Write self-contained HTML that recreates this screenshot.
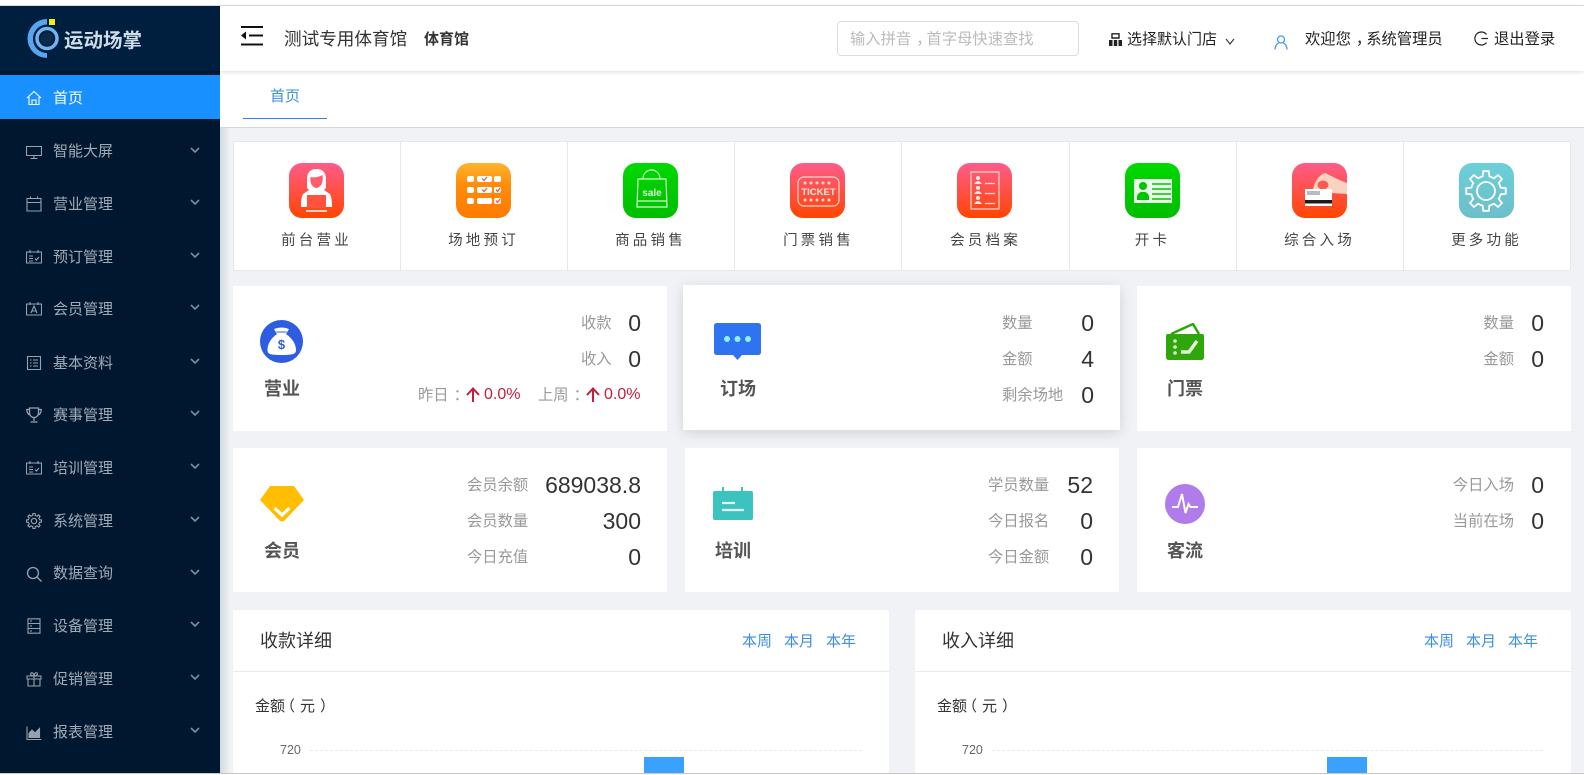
<!DOCTYPE html>
<html lang="zh-CN">
<head>
<meta charset="utf-8">
<title>运动场掌</title>
<style>
html,body{margin:0;padding:0;background:#fff;}
body{position:relative;width:1584px;height:775px;overflow:hidden;font-family:"Liberation Sans","Noto Sans CJK SC",sans-serif;color:#333;}
div,span,svg{position:absolute;}
.x{white-space:nowrap;line-height:20px;height:20px;}
.m{left:53px;font-size:15px;color:#a0abb6;}
.card{background:#fff;}
.l{font-size:15.300px;color:#999;}
.v{font-size:23px;color:#333;line-height:30px;height:30px;white-space:nowrap;}
.h{font-size:18px;font-weight:700;color:#555;line-height:24px;height:24px;width:80px;text-align:center;white-space:nowrap;}
.g{font-size:14.500px;color:#444;letter-spacing:3.200px;width:167px;text-align:center;top:231px;white-space:nowrap;line-height:20px;height:20px;}
.a{top:163px;width:55px;height:55px;}
.d{top:142px;width:1px;height:128px;background:#e6e8eb;}
.lk{font-size:15px;color:#3d8fe0;}
.ic{left:26px;width:16px;height:16px;fill:none;stroke:#97a2ae;stroke-width:1.1;}
.ch{left:190px;width:10px;height:6px;fill:none;stroke:#7f8c99;stroke-width:1.6;}
.r{color:#c41f3a;font-size:16px;}
i{font-style:normal;position:relative;left:5px;}
i.n{left:-5px;}
</style>
</head>
<body>
<!-- top line -->
<div style="left:0;top:5px;width:1584px;height:1px;background:#ddd"></div>

<!-- content bg -->
<div style="left:220px;top:128px;width:1364px;height:645px;background:#f0f2f5"></div>
<div style="left:0;top:773px;width:1584px;height:1px;background:#c8c8c8"></div>
<div style="left:220px;top:128px;width:10px;height:645px;background:linear-gradient(90deg,#d5d9df,#f0f2f5)"></div>

<!-- sidebar -->
<div style="left:0;top:6px;width:220px;height:767px;background:#001730"></div>
<div style="left:0;top:6px;width:220px;height:65px;background:#001f3f"></div>
<div style="left:0;top:75px;width:220px;height:44px;background:#1890ff"></div>

<!-- logo -->
<svg style="left:26px;top:18px" width="36" height="42" viewBox="0 0 36 42">
<path d="M21 1A19.500 19.500 0 1 0 21 40L21 35A14 14 0 0 1 7 20.500A14 14 0 0 1 21 6.500Z" fill="#57a5f0"/>
<circle cx="21" cy="20.500" r="10" fill="none" stroke="#6fb4f2" stroke-width="3.500"/>
<circle cx="21" cy="20.500" r="6" fill="#0b2b4a"/>
<rect x="23" y="1" width="6" height="6" fill="#f5ec14"/>
</svg>
<div class="x" style="left:64px;top:31px;font-size:19.500px;font-weight:700;color:#cfdde9">运动场掌</div>

<!-- menu -->
<svg class="ic" style="top:90px;stroke:#fff" viewBox="0 0 16 16"><path d="M1 8L8 1.500L15 8M3 7V14.500H13V7M6 14.500V10H10V14.500"/></svg>
<div class="x m" style="top:89px;color:#fff">首页</div>

<svg class="ic" style="top:144px" viewBox="0 0 16 16"><path d="M.5 2.500H15.500V11.500H.5ZM8 11.500V14.500M4.500 14.500H11.500"/></svg>
<div class="x m" style="top:142px">智能大屏</div>
<svg class="ch" style="top:147px" viewBox="0 0 10 6"><path d="M1 1L5 5L9 1"/></svg>

<svg class="ic" style="top:196px" viewBox="0 0 16 16"><path d="M1 2.500H15V15H1ZM1 6.500H15M4.500 .5V3M11.500 .5V3"/></svg>
<div class="x m" style="top:195px">营业管理</div>
<svg class="ch" style="top:199px" viewBox="0 0 10 6"><path d="M1 1L5 5L9 1"/></svg>

<svg class="ic" style="top:249px" viewBox="0 0 16 16"><path d="M.5 3H15.500V14H.5ZM4 1V4M12 1V4M3 7H7M3 9.500H7M3 12H7M9 9.500L10.500 11L13 8"/></svg>
<div class="x m" style="top:248px">预订管理</div>
<svg class="ch" style="top:252px" viewBox="0 0 10 6"><path d="M1 1L5 5L9 1"/></svg>

<svg class="ic" style="top:301px" viewBox="0 0 16 16"><path d="M.5 3H15.500V14H.5ZM4 1V4M12 1V4M5 12L8 5L11 12M6 10H10"/></svg>
<div class="x m" style="top:300px">会员管理</div>
<svg class="ch" style="top:304px" viewBox="0 0 10 6"><path d="M1 1L5 5L9 1"/></svg>

<svg class="ic" style="top:355px" viewBox="0 0 16 16"><path d="M1.500 1.500H14.500V14.500H1.500ZM4 5H5.500M4 8H5.500M4 11H5.500M7 5H12M7 8H12M7 11H12"/></svg>
<div class="x m" style="top:354px">基本资料</div>
<svg class="ch" style="top:358px" viewBox="0 0 10 6"><path d="M1 1L5 5L9 1"/></svg>

<svg class="ic" style="top:407px;stroke-width:1.300" viewBox="0 0 16 16"><path d="M3.500 1H12.500V6A4.500 4.500 0 0 1 3.500 6ZM3.500 2.500H.8Q.8 7 4 8M12.500 2.500H15.200Q15.200 7 12 8M8 10.500V14M4.500 15H11.500"/></svg>
<div class="x m" style="top:406px">赛事管理</div>
<svg class="ch" style="top:410px" viewBox="0 0 10 6"><path d="M1 1L5 5L9 1"/></svg>

<svg class="ic" style="top:460px" viewBox="0 0 16 16"><path d="M.5 3H15.500V14H.5ZM4 1V4M12 1V4M3 7H7M3 9.500H7M3 12H7M9 9.500L10.500 11L13 8"/></svg>
<div class="x m" style="top:459px">培训管理</div>
<svg class="ch" style="top:463px" viewBox="0 0 10 6"><path d="M1 1L5 5L9 1"/></svg>

<svg class="ic" style="top:513px" viewBox="-21 -21 42 42"><g stroke-width="3">
<circle r="7"/>
<path id="gt" d="M-5.740-13.860L-3.370-14.620L-2.780-19.810H2.780L3.370-14.620L5.740-13.860"/>
<use href="#gt" transform="rotate(45)"/><use href="#gt" transform="rotate(90)"/><use href="#gt" transform="rotate(135)"/><use href="#gt" transform="rotate(180)"/><use href="#gt" transform="rotate(225)"/><use href="#gt" transform="rotate(270)"/><use href="#gt" transform="rotate(315)"/>
</g></svg>
<div class="x m" style="top:512px">系统管理</div>
<svg class="ch" style="top:516px" viewBox="0 0 10 6"><path d="M1 1L5 5L9 1"/></svg>

<svg class="ic" style="top:566px;stroke-width:1.300" viewBox="0 0 16 16"><circle cx="7" cy="7" r="5.500"/><path d="M11 11L15.500 15.500"/></svg>
<div class="x m" style="top:564px">数据查询</div>
<svg class="ch" style="top:569px" viewBox="0 0 10 6"><path d="M1 1L5 5L9 1"/></svg>

<svg class="ic" style="top:618px" viewBox="0 0 16 16"><path d="M2 .8H14V15.200H2ZM2 5.500H14M2 10.500H14M4 3H6M4 8H6M4 13H6"/></svg>
<div class="x m" style="top:617px">设备管理</div>
<svg class="ch" style="top:621px" viewBox="0 0 10 6"><path d="M1 1L5 5L9 1"/></svg>

<svg class="ic" style="top:671px" viewBox="0 0 16 16"><path d="M1 5H15V8H1ZM2 8V15H14V8M8 5V15M8 5C5 5 4 3 5 2S8 2.500 8 5C8 2.500 10 1 11 2S11 5 8 5"/></svg>
<div class="x m" style="top:670px">促销管理</div>
<svg class="ch" style="top:674px" viewBox="0 0 10 6"><path d="M1 1L5 5L9 1"/></svg>

<svg class="ic" style="top:725px" viewBox="0 0 16 16"><path d="M1 1.500V14.500H15.500"/><path d="M3 12.500V8.500L6 5L9 8L13.500 3.500V12.500Z" fill="#97a2ae"/></svg>
<div class="x m" style="top:723px">报表管理</div>
<svg class="ch" style="top:727px" viewBox="0 0 10 6"><path d="M1 1L5 5L9 1"/></svg>

<!-- header -->
<div style="left:220px;top:71px;width:1364px;height:56px;background:#fff"></div>
<div style="left:220px;top:127px;width:1364px;height:1px;background:#d4d6d9"></div>
<div style="left:220px;top:6px;width:1364px;height:65px;background:#fff;box-shadow:0 1px 4px rgba(0,0,0,.14)"></div>

<svg style="left:241px;top:26px" width="22" height="20" viewBox="0 0 22 20"><path d="M0 1H22M8 9.500H22M0 18.500H22" stroke="#111" stroke-width="2" fill="none"/><path d="M5 5.500V13.500L0 9.500Z" fill="#111"/></svg>
<div class="x" style="left:284px;top:29px;font-size:17.600px;color:#333">测试专用体育馆</div>
<div class="x" style="left:424px;top:30px;font-size:15px;font-weight:700;color:#333">体育馆</div>

<div style="left:837px;top:21px;width:240px;height:33px;border:1px solid #ddd;border-radius:4px;background:#fff"></div>
<div class="x" style="left:850px;top:30px;font-size:15.300px;color:#bbb">输入拼音<i>，</i>首字母快速查找</div>

<svg style="left:1109px;top:33px" width="13" height="13" viewBox="0 0 13 13"><path d="M3 .8H10V5H3Z" fill="none" stroke="#222" stroke-width="1.400"/><path d="M0 7H3.500V13H0ZM4.800 7H8.200V13H4.800ZM9.500 7H13V13H9.500Z" fill="#222"/></svg>
<div class="x" style="left:1127px;top:30px;font-size:15px;color:#222">选择默认门店</div>
<svg style="left:1225px;top:38px" width="10" height="7" viewBox="0 0 10 7"><path d="M1 1L5 6L9 1" fill="none" stroke="#333" stroke-width="1.100"/></svg>

<svg style="left:1274px;top:35px" width="14" height="15" viewBox="0 0 14 15"><circle cx="7" cy="4.500" r="3.500" fill="none" stroke="#4a9bee" stroke-width="1.300"/><path d="M1 14.500C1 10.500 3.500 8 5 8M13 14.500C13 10.500 10.500 8 9 8" fill="none" stroke="#4a9bee" stroke-width="1.300"/></svg>
<div class="x" style="left:1305px;top:30px;font-size:15.300px;color:#222">欢迎您<i>，</i>系统管理员</div>

<svg style="left:1474px;top:31px" width="15" height="15" viewBox="0 0 15 15"><path d="M12.500 3.500A6.500 6.500 0 1 0 12.500 11.500" fill="none" stroke="#222" stroke-width="1.200"/><path d="M7.500 7.500H14" stroke="#222" stroke-width="1.200"/></svg>
<div class="x" style="left:1494px;top:30px;font-size:15.300px;color:#222">退出登录</div>

<!-- tab -->
<div class="x" style="left:270px;top:87px;font-size:15px;color:#3d8fe0">首页</div>
<div style="left:243px;top:118px;width:84px;height:1px;background:#2d86df"></div>

<!-- shortcuts -->
<div style="left:233px;top:141px;width:1336px;height:128px;background:#fff;border:1px solid #e6e8eb;border-radius:3px"></div>
<div class="d" style="left:400px"></div><div class="d" style="left:567px"></div><div class="d" style="left:734px"></div><div class="d" style="left:901px"></div><div class="d" style="left:1069px"></div><div class="d" style="left:1236px"></div><div class="d" style="left:1403px"></div>

<svg width="0" height="0" style="left:0;top:0"><defs>
<linearGradient id="gr" x1="0" y1="0" x2="0" y2="1"><stop offset="0" stop-color="#ff5c8c"/><stop offset="1" stop-color="#ff4500"/></linearGradient>
<linearGradient id="go" x1="0" y1="0" x2="0" y2="1"><stop offset="0" stop-color="#ffb52e"/><stop offset=".4" stop-color="#ff8c0a"/><stop offset="1" stop-color="#ff7a00"/></linearGradient>
<linearGradient id="gg" x1="0" y1="0" x2="0" y2="1"><stop offset="0" stop-color="#00d900"/><stop offset="1" stop-color="#00bd00"/></linearGradient>
<linearGradient id="gb" x1="0" y1="0" x2="0" y2="1"><stop offset="0" stop-color="#6cd0d8"/><stop offset="1" stop-color="#6dbecb"/></linearGradient>
</defs></svg>

<svg class="a" style="left:289px" viewBox="0 0 55 55"><rect width="55" height="55" rx="13" fill="url(#gr)"/>
<path d="M27.500 6C21 6 18 10 18 16V25L20 27L14 31C12 35 12 40 12 44H43C43 40 43 35 41 31L35 27L37 25V16C37 10 34 6 27.500 6Z" fill="#fff"/>
<path d="M21.500 14C25 15 30 14 33.500 12C34.500 18 33 24 27.500 25C22 24 21 19 21.500 14Z" fill="#ff5f6d"/>
<path d="M18 32H37V45H18Z" fill="#ff5340"/><path d="M17 48H38" stroke="#fff" stroke-width="1.500"/></svg>
<div class="x g" style="left:233px">前台营业</div>

<svg class="a" style="left:456px" viewBox="0 0 55 55"><rect width="55" height="55" rx="13" fill="url(#go)"/>
<g fill="#fff"><rect x="11" y="13" width="7" height="6" rx="2"/><rect x="21" y="13" width="15" height="6" rx="2"/><rect x="38" y="13" width="7" height="6" rx="2"/><rect x="11" y="24" width="7" height="6" rx="2"/><rect x="21" y="24" width="15" height="6" rx="2"/><rect x="38" y="24" width="7" height="6" rx="2"/><rect x="11" y="35" width="7" height="6" rx="2"/><rect x="21" y="35" width="15" height="6" rx="2"/><rect x="38" y="35" width="7" height="6" rx="2"/></g>
<path d="M26 15.500L28 17.500L31 14M26 26.500L28 28.500L31 25M40 26.500L41.500 28.500L44 25M40 37.500L41.500 39.500L44 36" fill="none" stroke="#f0503a" stroke-width="1.200"/></svg>
<div class="x g" style="left:400px">场地预订</div>

<svg class="a" style="left:623px" viewBox="0 0 55 55"><rect width="55" height="55" rx="13" fill="url(#gg)"/>
<path d="M15 16H43L44 44H14ZM14.500 38H43.500M20 16C20 4 37 4 37 16" fill="none" stroke="#d6f7d6" stroke-width="1.200"/>
<text x="29" y="33" font-family="Liberation Sans" font-size="10" font-weight="700" fill="#d9f8d9" text-anchor="middle">sale</text></svg>
<div class="x g" style="left:567px">商品销售</div>

<svg class="a" style="left:790px" viewBox="0 0 55 55"><rect width="55" height="55" rx="13" fill="url(#gr)"/>
<rect x="8" y="14" width="41" height="29" rx="6" fill="none" stroke="#ffd9cf" stroke-width="1.200"/>
<text x="28.500" y="32" font-family="Liberation Sans" font-size="9.500" font-weight="700" fill="#ffe9e2" text-anchor="middle">TICKET</text>
<g fill="#ffd9cf"><circle cx="15" cy="20" r="1.500"/><circle cx="21" cy="20" r="1.500"/><circle cx="27" cy="20" r="1.500"/><circle cx="33" cy="20" r="1.500"/><circle cx="39" cy="20" r="1.500"/><circle cx="15" cy="37" r="1.500"/><circle cx="21" cy="37" r="1.500"/><circle cx="27" cy="37" r="1.500"/><circle cx="33" cy="37" r="1.500"/><circle cx="39" cy="37" r="1.500"/></g></svg>
<div class="x g" style="left:735px">门票销售</div>

<svg class="a" style="left:957px" viewBox="0 0 55 55"><rect width="55" height="55" rx="13" fill="url(#gr)"/>
<rect x="14" y="9" width="28" height="37" fill="none" stroke="#ffd9cf" stroke-width="1.200"/>
<g fill="#ffe9e2"><circle cx="21" cy="15" r="2"/><path d="M17 21Q21 15 25 21Z"/><circle cx="21" cy="25" r="2"/><path d="M17 31Q21 25 25 31Z"/><circle cx="21" cy="35" r="2"/><path d="M17 41Q21 35 25 41Z"/></g>
<path d="M28 20.500H38M28 30.500H38M28 40.500H38" stroke="#ffe0d8" stroke-width="1.200"/></svg>
<div class="x g" style="left:902px">会员档案</div>

<svg class="a" style="left:1125px" viewBox="0 0 55 55"><rect width="55" height="55" rx="13" fill="url(#gg)"/>
<rect x="9" y="16" width="38" height="24" fill="#e9fbe9"/>
<circle cx="18" cy="23" r="4" fill="#00c400"/><path d="M12 37V33Q13 30 16 29H20Q23 30 24 33V37Z" fill="#00c400"/>
<path d="M27 21H46M27 26H46M27 31H46M27 36H46" stroke="#00c400" stroke-width="1.500"/></svg>
<div class="x g" style="left:1069px">开卡</div>

<svg class="a" style="left:1292px" viewBox="0 0 55 55"><rect width="55" height="55" rx="13" fill="url(#gr)"/>
<path d="M21 26C23 18 27 12 33 10C38 12 44 16 55 20V31L40 30L28 26Z" fill="#f8d3bf"/>
<ellipse cx="31" cy="22" rx="5.500" ry="4.500" fill="#ff5a52"/>
<rect x="13" y="26" width="27" height="17" fill="#fff"/><rect x="15" y="28" width="13" height="4" fill="#b5bcc6"/><rect x="13" y="37" width="27" height="3.500" fill="#1c1c1c"/></svg>
<div class="x g" style="left:1236px">综合入场</div>

<svg class="a" style="left:1459px" viewBox="0 0 55 55"><rect width="55" height="55" rx="13" fill="url(#gb)"/>
<g transform="translate(27 28)" fill="none" stroke="#fff" stroke-width="1.800"><circle r="9"/>
<path id="gu" d="M-5.740-13.860L-3.370-14.620L-2.780-19.810H2.780L3.370-14.620L5.740-13.860"/>
<use href="#gu" transform="rotate(45)"/><use href="#gu" transform="rotate(90)"/><use href="#gu" transform="rotate(135)"/><use href="#gu" transform="rotate(180)"/><use href="#gu" transform="rotate(225)"/><use href="#gu" transform="rotate(270)"/><use href="#gu" transform="rotate(315)"/></g></svg>
<div class="x g" style="left:1403px">更多功能</div>

<!-- stat cards -->
<div class="card" style="left:233px;top:286px;width:434px;height:145px"></div>
<div class="card" style="left:683px;top:285px;width:437px;height:145px;box-shadow:0 3px 12px rgba(0,0,0,.13)"></div>
<div class="card" style="left:1137px;top:286px;width:434px;height:145px"></div>
<div class="card" style="left:233px;top:448px;width:434px;height:144px"></div>
<div class="card" style="left:685px;top:448px;width:434px;height:144px"></div>
<div class="card" style="left:1137px;top:448px;width:434px;height:144px"></div>

<!-- card 1 -->
<svg style="left:260px;top:320px" width="43" height="43" viewBox="0 0 43 43"><circle cx="21.500" cy="21.500" r="21.500" fill="#2d5de0"/>
<path d="M14 9Q21.500 6 29 9L26 14C32 18 36 24 36 30C36 34 33 35 21.500 35C10 35 7.500 34 7.500 30C7.500 24 11 18 17 14Z" fill="#fff"/><path d="M16.500 12H26.500" stroke="#2d5de0" stroke-width="1"/>
<text x="21.500" y="29" font-family="Liberation Sans" font-size="13" font-weight="700" fill="#2d5de0" text-anchor="middle">$</text></svg>
<div class="h" style="left:242px;top:377px">营业</div>
<div class="x l" style="left:581px;top:314px">收款</div><div class="v" style="right:943px;top:308px">0</div>
<div class="x l" style="left:581px;top:350px">收入</div><div class="v" style="right:943px;top:344px">0</div>
<div class="x l" style="left:418px;top:386px">昨日<i>：</i></div>
<svg style="left:466px;top:387px" width="14" height="15" viewBox="0 0 14 15"><path d="M7 15V2M1 8L7 1.500L13 8" fill="none" stroke="#c41f3a" stroke-width="2"/></svg>
<div class="x r" style="left:484px;top:385px">0.0%</div>
<div class="x l" style="left:538px;top:386px">上周<i>：</i></div>
<svg style="left:586px;top:387px" width="14" height="15" viewBox="0 0 14 15"><path d="M7 15V2M1 8L7 1.500L13 8" fill="none" stroke="#c41f3a" stroke-width="2"/></svg>
<div class="x r" style="left:604px;top:385px">0.0%</div>

<!-- card 2 -->
<svg style="left:714px;top:323px" width="47" height="37" viewBox="0 0 47 37"><path d="M3 0H44Q47 0 47 3V29Q47 32 44 32H28L23.500 37L19 32H3Q0 32 0 29V3Q0 0 3 0Z" fill="#2f73f0"/><circle cx="13" cy="16" r="3" fill="#8ff0ff"/><circle cx="23.500" cy="16" r="3" fill="#8ff0ff"/><circle cx="34" cy="16" r="3" fill="#8ff0ff"/></svg>
<div class="h" style="left:698px;top:377px">订场</div>
<div class="x l" style="left:1002px;top:314px">数量</div><div class="v" style="right:490px;top:308px">0</div>
<div class="x l" style="left:1002px;top:350px">金额</div><div class="v" style="right:490px;top:344px">4</div>
<div class="x l" style="left:1002px;top:386px">剩余场地</div><div class="v" style="right:490px;top:380px">0</div>

<!-- card 3 -->
<svg style="left:1166px;top:323px" width="38" height="37" viewBox="0 0 38 37"><path d="M5 11L27 1L33 11" fill="none" stroke="#2fa70a" stroke-width="2.500"/><path d="M2 11H36Q38 11 38 13V34Q38 37 35 37H3Q0 37 0 34V13Q0 11 2 11Z" fill="#2fa70a"/>
<circle cx="9" cy="18" r="1.800" fill="#dff5d6"/><circle cx="9" cy="24" r="1.800" fill="#dff5d6"/><circle cx="9" cy="30" r="1.800" fill="#dff5d6"/>
<path d="M15 29H23L31 18" fill="none" stroke="#dff5d6" stroke-width="3.500"/></svg>
<div class="h" style="left:1145px;top:377px">门票</div>
<div class="x l" style="right:70px;top:314px">数量</div><div class="v" style="right:40px;top:308px">0</div>
<div class="x l" style="right:70px;top:350px">金额</div><div class="v" style="right:40px;top:344px">0</div>

<!-- card 4 -->
<svg style="left:260px;top:486px" width="44" height="36" viewBox="0 0 44 36"><path d="M10 0H34L44 14L24 35Q22 36 20 35L0 14Z" fill="#ffbe00"/><path d="M14.500 22L22 29L29.500 22" fill="none" stroke="#fff" stroke-width="3.200"/></svg>
<div class="h" style="left:242px;top:539px">会员</div>
<div class="x l" style="left:467px;top:476px">会员余额</div><div class="v" style="right:943px;top:470px">689038.8</div>
<div class="x l" style="left:467px;top:512px">会员数量</div><div class="v" style="right:943px;top:506px">300</div>
<div class="x l" style="left:467px;top:548px">今日充值</div><div class="v" style="right:943px;top:542px">0</div>

<!-- card 5 -->
<svg style="left:713px;top:487px" width="40" height="33" viewBox="0 0 40 33"><rect y="4" width="40" height="29" rx="2" fill="#3cc2bf"/><rect x="9" y="0" width="2" height="6" fill="#3cc2bf"/><rect x="28" y="0" width="2" height="6" fill="#3cc2bf"/><path d="M9 16H22M9 23H31" stroke="#eafafa" stroke-width="2.200"/></svg>
<div class="h" style="left:693px;top:539px">培训</div>
<div class="x l" style="left:988px;top:476px">学员数量</div><div class="v" style="right:491px;top:470px">52</div>
<div class="x l" style="left:988px;top:512px">今日报名</div><div class="v" style="right:491px;top:506px">0</div>
<div class="x l" style="left:988px;top:548px">今日金额</div><div class="v" style="right:491px;top:542px">0</div>

<!-- card 6 -->
<svg style="left:1165px;top:484px" width="40" height="40" viewBox="0 0 40 40"><circle cx="20" cy="20" r="20" fill="#b07bea"/><path d="M7 23H13L17 10L20.500 29L23.500 20L25.500 23H33" fill="none" stroke="#fff" stroke-width="2"/></svg>
<div class="h" style="left:1145px;top:539px">客流</div>
<div class="x l" style="right:70px;top:476px">今日入场</div><div class="v" style="right:40px;top:470px">0</div>
<div class="x l" style="right:70px;top:512px">当前在场</div><div class="v" style="right:40px;top:506px">0</div>

<!-- panels -->
<div class="card" style="left:233px;top:610px;width:656px;height:163px;border-radius:2px"></div>
<div style="left:233px;top:671px;width:656px;height:1px;background:#e8eaec"></div>
<div class="x" style="left:260px;top:631px;font-size:18px;color:#333">收款详细</div>
<div class="x lk" style="left:742px;top:632px">本周</div><div class="x lk" style="left:784px;top:632px">本月</div><div class="x lk" style="left:826px;top:632px">本年</div>
<div class="x" style="left:255px;top:697px;font-size:15px;color:#333">金额<i class="n">（</i>元<i>）</i></div>
<div class="x" style="left:280px;top:740px;font-size:12.500px;color:#666">720</div>
<div style="left:310px;top:750px;width:552px;height:0;border-top:1px dashed #e8e8e8"></div>
<div style="left:644px;top:757px;width:40px;height:16px;background:#3ba1ff"></div>

<div class="card" style="left:915px;top:610px;width:656px;height:163px;border-radius:2px"></div>
<div style="left:915px;top:671px;width:656px;height:1px;background:#e8eaec"></div>
<div class="x" style="left:942px;top:631px;font-size:18px;color:#333">收入详细</div>
<div class="x lk" style="left:1424px;top:632px">本周</div><div class="x lk" style="left:1466px;top:632px">本月</div><div class="x lk" style="left:1508px;top:632px">本年</div>
<div class="x" style="left:937px;top:697px;font-size:15px;color:#333">金额<i class="n">（</i>元<i>）</i></div>
<div class="x" style="left:962px;top:740px;font-size:12.500px;color:#666">720</div>
<div style="left:992px;top:750px;width:551px;height:0;border-top:1px dashed #e8e8e8"></div>
<div style="left:1327px;top:757px;width:40px;height:16px;background:#3ba1ff"></div>
</body>
</html>
